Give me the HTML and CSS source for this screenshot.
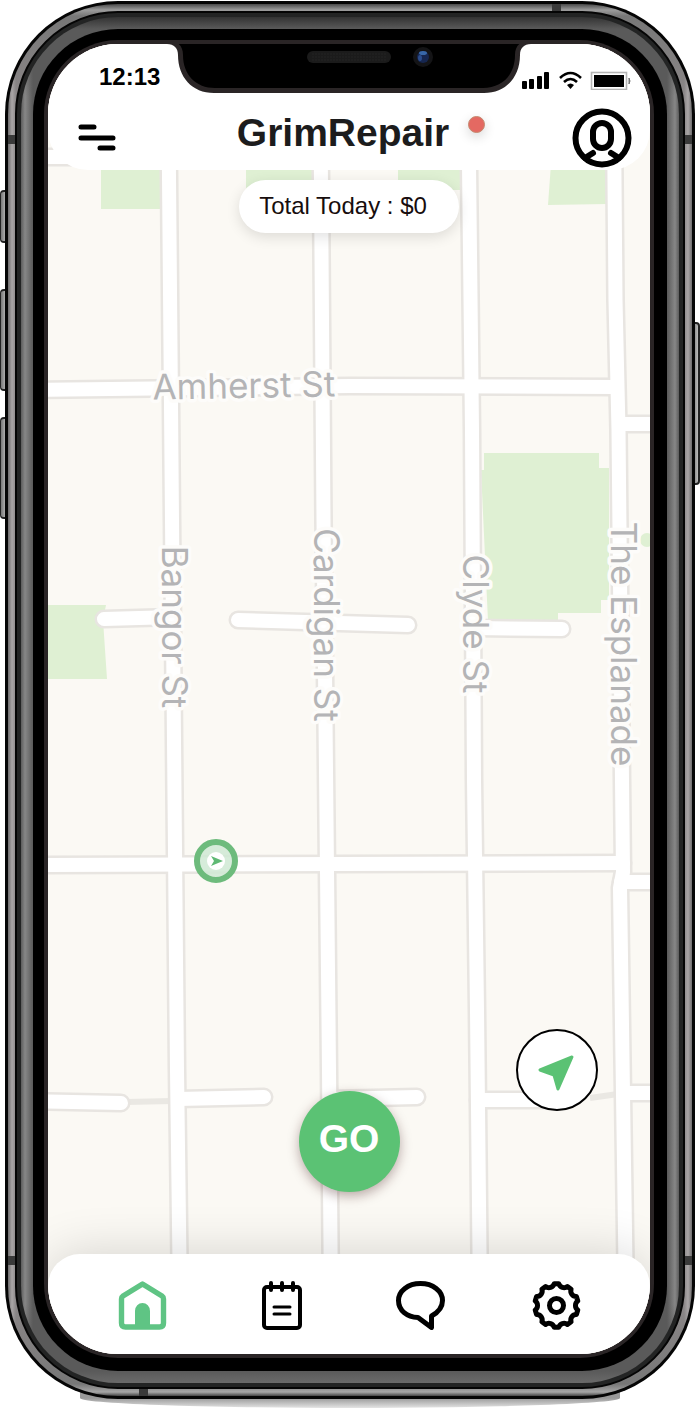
FILE: index.html
```html
<!DOCTYPE html>
<html lang="en">
<head>
<meta charset="utf-8">
<meta name="viewport" content="width=device-width, initial-scale=1">
<title>GrimRepair</title>
<link rel="stylesheet" href="styles.css">
</head>
<body>
<div class="device">
  <span class="key key-mute"></span>
  <span class="key key-up"></span>
  <span class="key key-down"></span>
  <span class="key key-power"></span>
  <span class="ground"></span>
  <div class="edge">
    <div class="metal">
      <span class="seam seam-top"></span>
      <span class="seam seam-left-high"></span>
      <span class="seam seam-right-high"></span>
      <span class="seam seam-left-low"></span>
      <span class="seam seam-right-low"></span>
      <span class="seam seam-bottom"></span>
      <div class="groove">
        <div class="band">
          <div class="bezel">
            <div class="screen">
              <svg class="map" viewBox="48 44 602 1310" preserveAspectRatio="xMidYMid slice" role="img" aria-label="Street map">
                <rect class="land" x="0" y="0" width="700" height="1410"/>
                <g class="park">
                  <path d="M101 150H160V209H101Z"/>
                  <path d="M246 150H314V190H246Z"/>
                  <path d="M398 150H462V190H398Z"/>
                  <path d="M552 150H607V204L548 205Z"/>
                  <path d="M40 605H106L103 620L107 679H40Z"/>
                  <path d="M484 453H599V468H609V600H601V613H558V621H488L481 470H484Z"/>
                  <circle cx="647" cy="540" r="7"/>
                </g>
                <g class="trail">
                  <path d="M126 1102L172 1101"/>
                  <path d="M590 1098L618 1094"/>
                </g>
                <g class="road-case">
                  <path d="M168.500 120L172 520L177 1070L180 1300"/>
                  <path d="M320.500 120L323.500 520L329 1070L331 1300"/>
                  <path d="M468.500 120L472 430L474 780L477 1010L480 1300"/>
                  <path d="M614 120L615.500 300L618.500 430L622 780L623 872L620 888L626 1300"/>
                  <path d="M30 157H74"/>
                  <path d="M30 390L350 386L616 387"/>
                  <path d="M619 424H670"/>
                  <path d="M30 865L623 863"/>
                  <path d="M621 882H670"/>
                  <path d="M104 619L174 617"/>
                  <path d="M238 620L408 625"/>
                  <path d="M474 628L562 629"/>
                  <path d="M30 1101L121 1103"/>
                  <path d="M178 1099L264 1097"/>
                  <path d="M330 1099L417 1097"/>
                  <path d="M478 1100H560"/>
                  <path d="M623 1093H670"/>
                </g>
                <g class="road">
                  <path d="M168.500 120L172 520L177 1070L180 1300"/>
                  <path d="M320.500 120L323.500 520L329 1070L331 1300"/>
                  <path d="M468.500 120L472 430L474 780L477 1010L480 1300"/>
                  <path d="M614 120L615.500 300L618.500 430L622 780L623 872L620 888L626 1300"/>
                  <path d="M30 157H74"/>
                  <path d="M30 390L350 386L616 387"/>
                  <path d="M619 424H670"/>
                  <path d="M30 865L623 863"/>
                  <path d="M621 882H670"/>
                  <path d="M104 619L174 617"/>
                  <path d="M238 620L408 625"/>
                  <path d="M474 628L562 629"/>
                  <path d="M30 1101L121 1103"/>
                  <path d="M178 1099L264 1097"/>
                  <path d="M330 1099L417 1097"/>
                  <path d="M478 1100H560"/>
                  <path d="M623 1093H670"/>
                </g>
                <g class="street">
                  <text transform="translate(244 398) rotate(-1)">Amherst St</text>
                  <text transform="translate(162 627) rotate(90)">Bangor St</text>
                  <text transform="translate(314 625) rotate(90)">Cardigan St</text>
                  <text transform="translate(463 624) rotate(90)">Clyde St</text>
                  <text transform="translate(611 644) rotate(90)">The Esplanade</text>
                </g>
                <g transform="translate(216 861)">
                  <circle class="pin-halo" r="19"/>
                  <circle class="pin-core" r="9"/>
                  <path class="pin-arrow" d="M-5 -5L7 0L-5 5L-2 0Z"/>
                </g>
              </svg>

              <svg class="notch" viewBox="0 0 370 54" aria-hidden="true">
                <path fill="#2a2526" d="M0 0V4H3C10 4 14 8 14 15C14 37 28 53 50 53H320C342 53 356 37 356 15C356 8 360 4 367 4H370V0Z"/>
                <path fill="#000" d="M4 0C14 1 19 6 19 15C19 35 32 48 51 48H319C338 48 351 35 351 15C351 6 356 1 366 0Z"/>
                <rect x="143" y="11" width="84" height="12" rx="6" fill="#1b1b1b"/>
                <path d="M148 14H222M148 17H222M148 20H222" stroke="#242424" stroke-dasharray="2 1"/>
                <circle cx="259" cy="17" r="10" fill="#141416"/>
                <circle cx="259" cy="17" r="6" fill="#16264f"/>
                <ellipse cx="259" cy="13" rx="4" ry="2" fill="#3867a8"/>
                <ellipse cx="256" cy="18" rx="2" ry="3" fill="#2b4c8c"/>
              </svg>

              <header class="top">
                <div class="status">
                  <span class="time">12:13</span>
                  <svg class="status-icons" width="110" height="20" viewBox="0 0 110 20" role="img" aria-label="Signal, Wi-Fi and battery">
                    <rect x="0" y="11" width="5" height="8" rx="1"/>
                    <rect x="7" y="9" width="5" height="10" rx="1"/>
                    <rect x="15" y="6" width="5" height="13" rx="1"/>
                    <rect x="22" y="2" width="5" height="17" rx="1"/>
                    <g fill="none" stroke="#000" stroke-width="2.600">
                      <path d="M38 8Q48.500 -2 59 8"/>
                      <path d="M42 12Q48.500 6 55 12"/>
                    </g>
                    <path d="M45 15Q48.500 12 52 15L48.500 19Z"/>
                    <rect x="69.500" y="2.500" width="35" height="17" fill="#fff" stroke="#b5b5b5" stroke-width="1.600"/>
                    <rect x="72" y="5" width="30" height="12"/>
                    <path d="M107 8Q109 11 107 14Z" fill="#777" stroke="#777"/>
                  </svg>
                </div>
                <div class="titlebar">
                  <button class="icon-button" type="button" aria-label="Menu">
                    <svg width="38" height="28" viewBox="0 0 38 28" fill="none" stroke="#000" stroke-width="5" stroke-linecap="round">
                      <path d="M3 3H16M3 14H35M22 24H35"/>
                    </svg>
                  </button>
                  <h1 class="title">GrimRepair<span class="dot"></span></h1>
                  <button class="icon-button profile" type="button" aria-label="Profile">
                    <svg width="60" height="60" viewBox="0 0 60 60" fill="none" stroke="#000" stroke-width="6">
                      <circle cx="30" cy="30" r="26.500"/>
                      <rect x="21" y="15" width="18" height="25" rx="9"/>
                      <path d="M13 50L21 45M47 50L39 45" stroke-linecap="round"/>
                    </svg>
                  </button>
                </div>
              </header>

              <main class="content">
                <p class="total">Total Today : $0</p>
                <div class="controls">
                  <button class="go" type="button">GO</button>
                  <button class="locate" type="button" aria-label="My location">
                    <svg width="78" height="78" viewBox="2 2 78 78">
                      <path d="M56 28L24 41L38 46L42 60Z" fill="#5bc274" stroke="#5bc274" stroke-width="3" stroke-linejoin="round"/>
                    </svg>
                  </button>
                </div>
              </main>

              <nav class="tabs" aria-label="Main">
                <a class="tab tab-active" href="#home" aria-label="Home" aria-current="page">
                  <svg width="49" height="49" viewBox="-1 0 49 49">
                    <path d="M23.500 3L43 15Q44.500 16 44.500 18V42Q44.500 46 40.500 46H6.500Q2.500 46 2.500 42V18Q2.500 16 4 15Z" fill="none" stroke="currentColor" stroke-width="5.400" stroke-linejoin="round"/>
                    <path d="M16 46V30A7.500 8 0 0 1 31 30V46Z" fill="currentColor"/>
                  </svg>
                </a>
                <a class="tab" href="#jobs" aria-label="Jobs">
                  <svg width="49" height="49" viewBox="-6 0 49 49" fill="none" stroke="currentColor" stroke-linecap="round">
                    <rect x="2" y="6" width="36" height="41" rx="3" stroke-width="4"/>
                    <path d="M9 2V9M20 2V9M31 2V9" stroke-width="4"/>
                    <path d="M12 26H28M12 33H28" stroke-width="3"/>
                  </svg>
                </a>
                <a class="tab" href="#messages" aria-label="Messages">
                  <svg width="53" height="49" viewBox="-4 0 53 49" fill="none" stroke="currentColor" stroke-width="5" stroke-linejoin="round">
                    <path d="M24.500 2.500C12 2.500 2.500 10 2.500 19.500C2.500 29.500 11 36 22 36.500L35.500 46.500V35C42 31.500 46.500 26.500 46.500 19.500C46.500 10 37 2.500 24.500 2.500Z"/>
                  </svg>
                </a>
                <a class="tab" href="#settings" aria-label="Settings">
                  <svg width="49" height="49" viewBox="-24.500 -24.500 49 49" fill="none" stroke="currentColor" stroke-width="5" stroke-linejoin="round">
                    <path d="M-2.300 -21.700H2.300A5.500 5.500 0 0 0 10.900 -18.900L14.600 -16.200A5.500 5.500 0 0 0 19.900 -8.900L21.300 -4.500A5.500 5.500 0 0 0 21.300 4.500L19.900 8.900A5.500 5.500 0 0 0 14.600 16.200L10.900 18.900A5.500 5.500 0 0 0 2.300 21.700H-2.300A5.500 5.500 0 0 0 -10.900 18.900L-14.600 16.200A5.500 5.500 0 0 0 -19.900 8.900L-21.300 4.500A5.500 5.500 0 0 0 -21.300 -4.500L-19.900 -8.900A5.500 5.500 0 0 0 -14.600 -16.200L-10.900 -18.900A5.500 5.500 0 0 0 -2.300 -21.700Z"/>
                    <circle r="7"/>
                  </svg>
                </a>
              </nav>
            </div>
          </div>
        </div>
      </div>
    </div>
  </div>
</div>
</body>
</html>
```

FILE: styles.css
```css
* {
  box-sizing: border-box;
}

body {
  margin: 0;
  background: #fff;
  color: #000;
  font-family: "Liberation Sans", Arial, sans-serif;
}

/* Phone body */
.device {
  position: relative;
  display: flex;
  max-width: 700px;
  min-height: 100vh;
  margin: 0 auto;
  padding: 1px 5px 11px;
}

.edge,
.metal,
.groove,
.band,
.bezel {
  position: relative;
  display: flex;
  flex: 1;
  min-width: 0;
}

.edge {
  padding: 3px;
  border-radius: 113px;
  background: #050505;
}

.metal {
  padding: 7px;
  border-radius: 110px;
  background:
    linear-gradient(to bottom, #4a4a4a, #9c9c9c 6px, #777 12px, transparent 90px, transparent calc(100% - 90px), #777 calc(100% - 12px), #a6a6a6 calc(100% - 4px), #444),
    linear-gradient(to right, #6e6c6d, #aaa6a7 4px, #8a8687 8px, #8a8687 calc(100% - 8px), #aaa6a7 calc(100% - 4px), #6e6c6d);
}

.groove {
  padding: 4px;
  border: 2px solid #050505;
  border-radius: 103px;
  background: #232424;
}

.band {
  padding: 12px;
  border-radius: 97px;
  background:
    linear-gradient(to bottom, #333 0, #5a5a5a 12px, transparent 80px, transparent calc(100% - 80px), #5a5a5a calc(100% - 12px), #6a6a6a),
    linear-gradient(to right, #5c5c5c, #878787 4px, #5a5a5a 12px, #5a5a5a calc(100% - 12px), #878787 calc(100% - 4px), #5c5c5c);
}

.bezel {
  padding: 11px 13px 13px 11px;
  border-radius: 85px;
  background: #000;
}

.screen {
  position: relative;
  isolation: isolate;
  display: flex;
  flex: 1;
  flex-direction: column;
  min-width: 0;
  border-radius: 70px;
  box-shadow: 0 0 0 4px #2a2526;
  margin: 4px;
  overflow: hidden;
  background: #fbf9f4;
}

.ground {
  position: absolute;
  right: 80px;
  bottom: 2px;
  left: 80px;
  height: 20px;
  border-radius: 0 0 50% 50% / 0 0 10px 10px;
  background: linear-gradient(to bottom, #999 50%, #e4e4e4);
}

.key {
  position: absolute;
  left: 0;
  width: 8px;
  border: 2px solid #222;
  border-left-width: 1px;
  border-radius: 4px 0 0 4px;
  background: linear-gradient(to right, #777, #bbb);
}

.key-mute {
  top: 190px;
  height: 53px;
}

.key-up {
  top: 289px;
  height: 102px;
}

.key-down {
  top: 417px;
  height: 102px;
}

.key-power {
  top: 322px;
  right: 0;
  left: auto;
  height: 163px;
  border-radius: 0 4px 4px 0;
}

.seam {
  position: absolute;
  width: 7px;
  height: 9px;
  background: #3a3a3a;
}

.seam-top {
  top: 0;
  right: 131px;
  width: 9px;
  height: 7px;
}

.seam-bottom {
  bottom: 0;
  left: 131px;
  width: 9px;
  height: 7px;
}

.seam-left-high {
  top: 131px;
  left: 0;
}

.seam-right-high {
  top: 131px;
  right: 0;
}

.seam-left-low {
  bottom: 131px;
  left: 0;
}

.seam-right-low {
  right: 0;
  bottom: 131px;
}

.notch {
  position: absolute;
  z-index: 3;
  top: -4px;
  left: 50%;
  width: 370px;
  height: 54px;
  transform: translateX(-50%);
}

/* Map */
.map {
  position: absolute;
  z-index: -1;
  inset: 0;
  width: 100%;
  height: 100%;
}

.land {
  fill: #fbf9f4;
}

.park {
  fill: #dff0d3;
}

.trail {
  fill: none;
  stroke: #eae8e3;
  stroke-width: 6px;
}

.road-case,
.road {
  fill: none;
  stroke-linecap: round;
  stroke-linejoin: round;
}

.road-case {
  stroke: #e8e5e1;
  stroke-width: 19px;
}

.road {
  stroke: #fff;
  stroke-width: 14px;
}

.street {
  fill: #b4b4b6;
  stroke: #fdfcfa;
  stroke-width: 7px;
  stroke-linejoin: round;
  paint-order: stroke;
  font-family: Inter, Roboto, sans-serif;
  font-size: 35px;
  text-anchor: middle;
}

.pin-halo {
  fill: #cfe9d3;
  fill-opacity: 0.85;
  stroke: #6dbb7c;
  stroke-width: 6px;
}

.pin-core {
  fill: #fff;
}

.pin-arrow {
  fill: #5fb974;
}

/* Header */
.top {
  padding: 20px 18px 2px 30px;
  border-radius: 0 0 40px 40px;
  background: #fff;
}

.status {
  display: flex;
  align-items: flex-end;
  justify-content: space-between;
  height: 44px;
  padding: 0 0 18px 21px;
}

.time {
  font-size: 24px;
  font-weight: 700;
  line-height: 26px;
}

.titlebar {
  display: grid;
  grid-template-columns: 38px 1fr 62px;
  align-items: center;
  height: 60px;
}

.icon-button {
  display: flex;
  padding: 0;
  border: 0;
  background: none;
}

.profile {
  justify-self: end;
}

.title {
  position: relative;
  place-self: start center;
  margin: 0;
  color: #1c1c1d;
  font-size: 39px;
  font-weight: 700;
  line-height: 50px;
}

.dot {
  position: absolute;
  top: 8px;
  right: -36px;
  width: 17px;
  height: 17px;
  border: 1px solid #c58a70;
  border-radius: 50%;
  background: #e46962;
  box-shadow: 0 4px 12px rgba(0, 0, 0, 0.16);
}

/* Content */
.content {
  display: flex;
  flex: 1;
  flex-direction: column;
  align-items: center;
  justify-content: space-between;
  padding-top: 10px;
}

.total {
  margin: 0;
  padding: 0 32px 2px 20px;
  border-radius: 27px;
  background: #fff;
  box-shadow: 0 4px 14px rgba(0, 0, 0, 0.12);
  color: #170d0d;
  font-size: 24px;
  line-height: 51px;
}

.controls {
  display: grid;
  grid-template-columns: 1fr auto 1fr;
  align-self: stretch;
  height: 225px;
  padding: 0 52px 62px;
}

.go {
  grid-column: 2;
  align-self: end;
  width: 101px;
  height: 101px;
  padding: 0 0 6px;
  border: 0;
  border-radius: 50%;
  background: #5bc274;
  box-shadow: 0 4px 12px rgba(60, 20, 20, 0.35);
  color: #fff;
  font: 700 39px/48px "Liberation Sans", Arial, sans-serif;
}

.locate {
  grid-column: 3;
  justify-self: end;
  width: 82px;
  height: 82px;
  padding: 0;
  border: 2px solid #000;
  border-radius: 50%;
  background: #fff;
}

.locate svg {
  display: block;
}

/* Bottom navigation */
.tabs {
  display: grid;
  grid-template-columns: repeat(4, 1fr);
  padding: 27px 25px 24px;
  border-radius: 32px 32px 0 0;
  background: #fff;
  box-shadow: 0 0 50px rgba(0, 0, 0, 0.16);
}

.tab {
  display: flex;
  justify-content: center;
  color: #000;
}

.tab-active {
  color: #5fc484;
}
```
